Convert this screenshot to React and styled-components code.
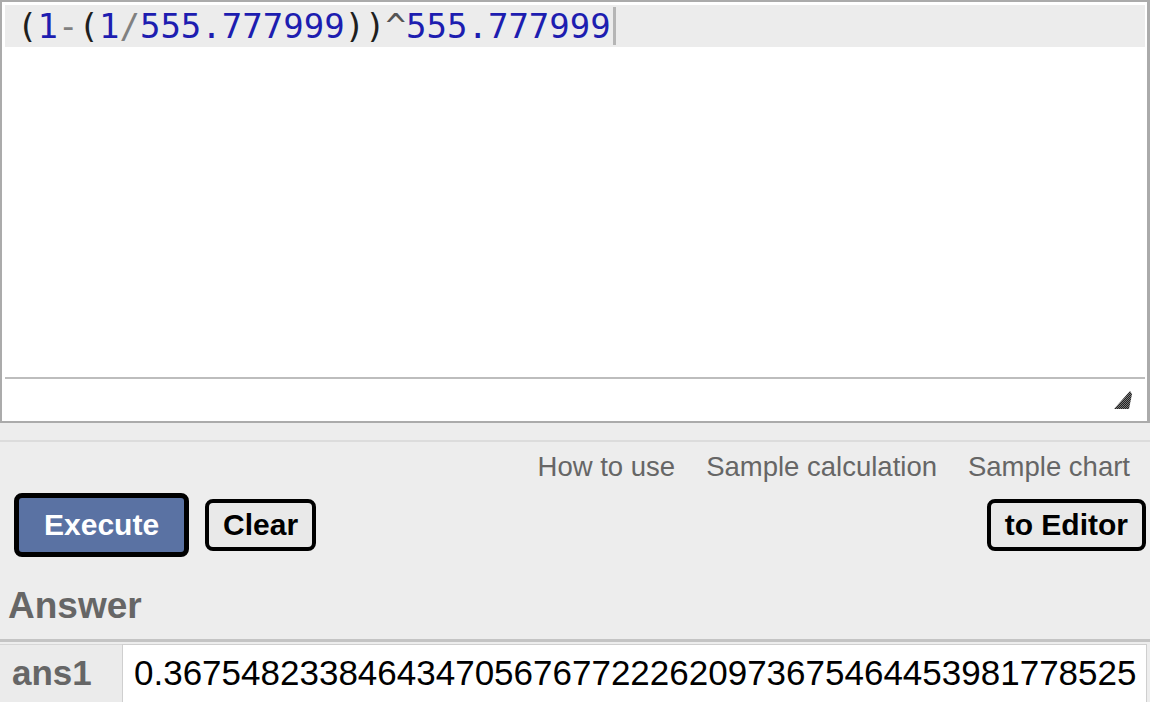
import React from 'react'
import styled, {createGlobalStyle} from 'styled-components'

const GlobalStyle = createGlobalStyle`
  html, body {
    margin: 0;
    padding: 0;
    background: #ededed;
    font-family: "Liberation Sans", Arial, sans-serif;
  }
`

const tokens = [
  {t: '(', k: 'paren'},
  {t: '1', k: 'num'},
  {t: '-', k: 'op'},
  {t: '(', k: 'paren'},
  {t: '1', k: 'num'},
  {t: '/', k: 'op'},
  {t: '555.777999', k: 'num'},
  {t: '))', k: 'paren'},
  {t: '^', k: 'caret'},
  {t: '555.777999', k: 'num'},
]

const links = ['How to use', 'Sample calculation', 'Sample chart']

const answers = [
  {name: 'ans1', value: '0.36754823384643470567677222620973675464453981778525'},
]

const ResizeGrip = () => (
  <svg width="20" height="20" viewBox="0 0 20 20">
    <defs>
      <pattern id="dots" width="2" height="2" patternUnits="userSpaceOnUse">
        <rect width="2" height="2" fill="#7a7a7a" />
        <rect width="1" height="1" fill="#222" />
        <rect x="1" y="1" width="1" height="1" fill="#222" />
      </pattern>
    </defs>
    <polygon points="17,1 19,4 16,19 1,19" fill="url(#dots)" />
  </svg>
)

const App = () => (
  <Page>
    <GlobalStyle />
    <Editor>
      <CodeArea>
        <ActiveLine>
          {tokens.map((tok, i) => (
            <Token key={i} kind={tok.k}>
              {tok.t}
            </Token>
          ))}
          <Cursor />
        </ActiveLine>
      </CodeArea>
      <EditorFooter>
        <ResizeGrip />
      </EditorFooter>
    </Editor>
    <Controls>
      <Links>
        {links.map(l => (
          <LinkItem key={l}>{l}</LinkItem>
        ))}
      </Links>
      <Buttons>
        <Button primary>Execute</Button>
        <Button>Clear</Button>
        <Spacer />
        <Button>to Editor</Button>
      </Buttons>
    </Controls>
    <Heading>Answer</Heading>
    <AnswerTable>
      {answers.map(a => (
        <AnswerRow key={a.name}>
          <AnswerName>{a.name}</AnswerName>
          <AnswerValue>{a.value}</AnswerValue>
        </AnswerRow>
      ))}
    </AnswerTable>
  </Page>
)

export default App

const Page = styled.div`
  width: 1150px;
  height: 702px;
  overflow: hidden;
  background: #ededed;
`

const Editor = styled.div`
  box-sizing: border-box;
  width: 1150px;
  height: 423px;
  border: 2px solid #ababab;
  border-right-width: 3px;
  background: #fff;
  padding: 3px 2px 0 3px;
  display: flex;
  flex-direction: column;
`

const CodeArea = styled.div`
  height: 372px;
  border-bottom: 2px solid #bdbdbd;
`

const ActiveLine = styled.div`
  display: flex;
  align-items: center;
  height: 42px;
  background: #ececec;
  padding-left: 12px;
  font-family: "DejaVu Sans Mono", "Liberation Mono", monospace;
  font-size: 34px;
  white-space: pre;
`

const tokenColors = {
  paren: '#1e1e1e',
  num: '#1d1db0',
  op: '#808080',
  caret: '#555',
}

const Token = styled.span`
  color: ${p => tokenColors[p.kind]};
`

const Cursor = styled.span`
  width: 3px;
  height: 38px;
  margin-left: 2px;
  background: #b5b5b5;
`

const EditorFooter = styled.div`
  flex: 1;
  display: flex;
  justify-content: flex-end;
  align-items: flex-end;
  padding: 0 12px 11px 0;
`

const Controls = styled.div`
  margin-top: 17px;
  border-top: 2px solid #dcdcdc;
  padding: 9px 4px 0 14px;
`

const Links = styled.div`
  display: flex;
  justify-content: flex-end;
  gap: 31px;
  padding-right: 16px;
`

const LinkItem = styled.span`
  font-size: 27.5px;
  line-height: 32px;
  color: #666;
`

const Buttons = styled.div`
  display: flex;
  align-items: center;
  gap: 16px;
  margin-top: 10px;
`

const Spacer = styled.div`
  flex: 1;
`

const Button = styled.button`
  box-sizing: border-box;
  font-family: "Liberation Sans", Arial, sans-serif;
  font-weight: bold;
  font-size: 30px;
  line-height: 34px;
  color: ${p => (p.primary ? '#fff' : '#000')};
  background: ${p => (p.primary ? '#5a72a3' : '#e9e9e9')};
  border: ${p => (p.primary ? '5px' : '4px')} solid #000;
  border-radius: 8px;
  padding: ${p => (p.primary ? '10px 25px' : '5px 14px')};
`

const Heading = styled.h2`
  margin: 28px 0 0 8px;
  font-size: 37px;
  line-height: 42px;
  color: #666;
`

const AnswerTable = styled.div`
  margin-top: 12px;
  border-top: 3px solid #c4c4c4;
  padding-top: 2px;
`

const AnswerRow = styled.div`
  display: grid;
  grid-template-columns: 122px 1025px;
`

const AnswerName = styled.div`
  background: #ebebeb;
  border-top: 1px solid #d6d6d6;
  padding: 8px 0 0 12px;
  height: 58px;
  font-weight: bold;
  font-size: 35px;
  line-height: 40px;
  color: #666;
`

const AnswerValue = styled.div`
  background: #fff;
  border: 1px solid #cfcfcf;
  padding: 8px 0 0 11px;
  font-size: 35px;
  line-height: 40px;
  color: #000;
  white-space: nowrap;
`
